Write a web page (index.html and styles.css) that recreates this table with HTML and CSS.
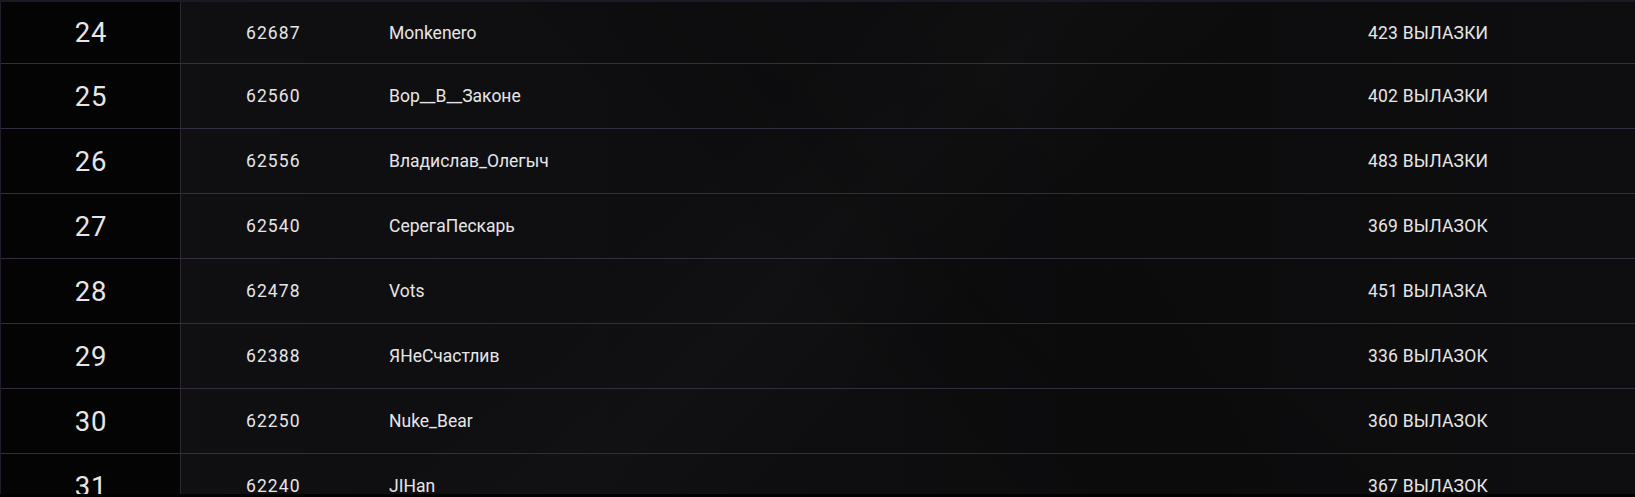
FILE: index.html
```
<!DOCTYPE html>
<html lang="ru">
<head>
<meta charset="utf-8">
<title>Рейтинг</title>
<link rel="stylesheet" href="styles.css">
</head>
<body>
<div class="board">
  <div class="row first"><div class="rank">24</div><div class="id">62687</div><div class="name">Monkenero</div><div class="score">423 ВЫЛАЗКИ</div></div>
  <div class="row"><div class="rank">25</div><div class="id">62560</div><div class="name">Вор__В__Законе</div><div class="score">402 ВЫЛАЗКИ</div></div>
  <div class="row"><div class="rank">26</div><div class="id">62556</div><div class="name">Владислав_Олегыч</div><div class="score">483 ВЫЛАЗКИ</div></div>
  <div class="row"><div class="rank">27</div><div class="id">62540</div><div class="name">СерегаПескарь</div><div class="score">369 ВЫЛАЗОК</div></div>
  <div class="row"><div class="rank">28</div><div class="id">62478</div><div class="name">Vots</div><div class="score">451 ВЫЛАЗКА</div></div>
  <div class="row"><div class="rank">29</div><div class="id">62388</div><div class="name">ЯНеСчастлив</div><div class="score">336 ВЫЛАЗОК</div></div>
  <div class="row"><div class="rank">30</div><div class="id">62250</div><div class="name">Nuke_Bear</div><div class="score">360 ВЫЛАЗОК</div></div>
  <div class="row"><div class="rank">31</div><div class="id">62240</div><div class="name">JIHan</div><div class="score">367 ВЫЛАЗОК</div></div>
</div>
</body>
</html>
```
FILE: styles.css
```
html, body {
  margin: 0;
  padding: 0;
  background: #000;
}
body {
  width: 1635px;
  height: 497px;
  overflow: hidden;
  font-family: Roboto, "Noto Sans", sans-serif;
  color: #e6e6e8;
}
.board {
  height: 492px;
  overflow: hidden;
  border-top: 2px solid #1e1824;
  border-left: 1px solid #221c29;
  background:
    linear-gradient(135deg, rgba(255,255,255,0) 40%, rgba(255,255,255,0.012) 50%, rgba(255,255,255,0) 60%),
    linear-gradient(45deg, rgba(0,0,0,0) 45%, rgba(0,0,0,0.12) 55%, rgba(0,0,0,0) 70%),
    linear-gradient(90deg, #100f12 0%, #0e0e10 50%, #0c0c0d 70%, #0e0e10 100%);
}
.row {
  display: flex;
  align-items: stretch;
  height: 64px;
  border-bottom: 1px solid #362c3f;
}
.row.first {
  height: 61px;
}
.rank {
  width: 180px;
  flex: none;
  background: #040404;
  border-right: 1px solid #2d2733;
  display: flex;
  align-items: center;
  justify-content: center;
  font-size: 27.5px;
  letter-spacing: 0.8px;
  padding-left: 1px;
  box-sizing: border-box;
}
.id, .name, .score {
  display: flex;
  align-items: center;
  font-size: 17.5px;
}
.id {
  width: 208px;
  flex: none;
  padding-left: 65px;
  box-sizing: border-box;
  letter-spacing: 1.1px;
}
.name {
  flex: 1;
  letter-spacing: 0;
}
.score {
  width: 267px;
  flex: none;
  letter-spacing: 0.2px;
}
```
